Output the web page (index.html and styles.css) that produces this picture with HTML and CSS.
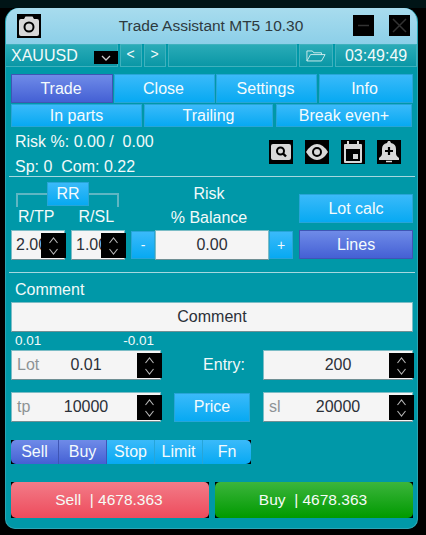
FILE: index.html
```html
<!DOCTYPE html>
<html lang="en">
<head>
<meta charset="utf-8">
<title>Trade Assistant MT5</title>
<link rel="stylesheet" href="styles.css">
</head>
<body>
<svg class="defs" width="0" height="0" aria-hidden="true">
  <symbol id="updown" viewBox="0 0 25 25"><path d="M8.500 10l4-5 4 5M8.500 16l4 5 4-5" fill="none" stroke="#b4b4b4" stroke-width="1.100"/></symbol>
</svg>
<main class="window">
  <header class="titlebar">
    <svg class="ico cam" viewBox="0 0 24 24"><rect width="24" height="24" fill="#000"/><path d="M2 7q0-2 2-2h3l1.500-2.500h7L17 5h3q2 0 2 2v13q0 2-2 2H4q-2 0-2-2z" fill="#d8d8d8"/><circle cx="12" cy="13" r="4.500" fill="none" stroke="#000" stroke-width="2"/></svg>
    <h1 class="title">Trade Assistant MT5 10.30</h1>
    <div class="winbtn min"><svg viewBox="0 0 21 21"><path d="M5 10.500h11" stroke="#333" stroke-width="1.500"/></svg></div>
    <div class="winbtn"><svg viewBox="0 0 21 21"><path d="M4 4l13 13M17 4L4 17" stroke="#333" stroke-width="1.500"/></svg></div>
  </header>
  <nav class="toolbar">
    <div class="tool sym"><span>XAUUSD</span><span class="dd"><svg viewBox="0 0 24 13"><path d="M8 5l4 4 4-4" fill="none" stroke="#ccc" stroke-width="1.300"/></svg></span></div>
    <div class="tool arrow">&lt;</div>
    <div class="tool arrow">&gt;</div>
    <div class="tool blank"></div>
    <div class="tool folder"><svg viewBox="0 0 22 14"><path d="M1 13V2h6l1.500 2H17v2M1 13L5 6h16l-4 7z" fill="none" stroke="#d8f0f0" stroke-width="1"/></svg></div>
    <div class="tool clock">03:49:49</div>
  </nav>
  <div class="content">
    <div class="tabs">
      <div class="btn active t1">Trade</div>
      <div class="btn t2">Close</div>
      <div class="btn t3">Settings</div>
      <div class="btn t4">Info</div>
    </div>
    <div class="subtabs">
      <div class="btn s1">In parts</div>
      <div class="btn s2">Trailing</div>
      <div class="btn s3">Break even+</div>
    </div>
    <section class="stats">
      <div class="statstext">
        <div class="stat">Risk %: 0.00 /&nbsp; 0.00</div>
        <div class="stat sp">Sp: 0&nbsp; Com: 0.22</div>
      </div>
      <div class="icons">
        <svg class="ico" viewBox="0 0 24 24"><rect width="24" height="24"/><rect x="2" y="4" width="20" height="16" rx="2" fill="#d8d8d8"/><circle cx="11.500" cy="11" r="3.500" fill="none" stroke="#000" stroke-width="2"/><path d="M14 13.500l3 3" stroke="#000" stroke-width="2.400"/></svg>
        <svg class="ico" viewBox="0 0 24 24"><rect width="24" height="24"/><path d="M1 12q5-8 11-8t11 8q-5 8-11 8T1 12z" fill="#d8d8d8"/><circle cx="12" cy="12" r="4" fill="none" stroke="#000" stroke-width="2"/></svg>
        <svg class="ico" viewBox="0 0 24 24"><rect width="24" height="24"/><path d="M3 5q0-1 1-1h16q1 0 1 1v17q0 1-1 1H4q-1 0-1-1z" fill="#d8d8d8"/><path d="M7 1v4M17 1v4" stroke="#d8d8d8" stroke-width="2"/><rect x="5" y="9" width="14" height="12" fill="#000"/><rect x="12" y="14" width="5" height="5" fill="#d8d8d8"/></svg>
        <svg class="ico" viewBox="0 0 24 24"><rect width="24" height="24"/><path d="M2 20v-2q3-2 3-4V9q0-5 5-6l1-2h2l1 2q5 1 5 6v5q0 2 3 4v2z" fill="#d8d8d8"/><path d="M9 21.500h6" stroke="#d8d8d8" stroke-width="1.500"/><path d="M12 7v8M8 11h8" stroke="#000" stroke-width="2.200"/></svg>
      </div>
    </section>
    <hr class="sep">
    <section class="risk">
      <div class="rr">
        <div class="rrhead"><div class="btn rrbtn">RR</div></div>
        <div class="rrlabels"><span>R/TP</span><span>R/SL</span></div>
        <div class="rrinputs">
          <div class="input small"><span>2.00</span><svg class="spin"><use href="#updown"/></svg></div>
          <div class="input small"><span>1.00</span><svg class="spin"><use href="#updown"/></svg></div>
        </div>
      </div>
      <div class="pct">
        <div class="pctlabel">Risk</div>
        <div class="pctlabel second">% Balance</div>
        <div class="stepper">
          <div class="btn step">-</div>
          <div class="input pctval">0.00</div>
          <div class="btn step">+</div>
        </div>
      </div>
      <div class="side">
        <div class="btn sidebtn">Lot calc</div>
        <div class="btn active sidebtn">Lines</div>
      </div>
    </section>
    <hr class="sep">
    <div class="stat comment">Comment</div>
    <div class="input commentbox">Comment</div>
    <div class="margins"><span>0.01</span><span>-0.01</span></div>
    <section class="order">
      <div class="input field"><span class="ph">Lot</span><span class="val">0.01</span><svg class="spin"><use href="#updown"/></svg></div>
      <div class="mid entry">Entry:</div>
      <div class="input field"><span class="val">200</span><svg class="spin"><use href="#updown"/></svg></div>
      <div class="input field"><span class="ph">tp</span><span class="val">10000</span><svg class="spin"><use href="#updown"/></svg></div>
      <div class="mid"><div class="btn price">Price</div></div>
      <div class="input field"><span class="ph">sl</span><span class="val">20000</span><svg class="spin"><use href="#updown"/></svg></div>
    </section>
    <div class="segwrap">
      <div class="btn active seg first">Sell</div>
      <div class="btn active seg">Buy</div>
      <div class="btn seg">Stop</div>
      <div class="btn seg">Limit</div>
      <div class="btn seg last">Fn</div>
    </div>
    <div class="trade">
      <div class="tradecell"><div class="tradebtn sell">Sell&nbsp; | 4678.363</div></div>
      <div class="tradecell"><div class="tradebtn buy">Buy&nbsp; | 4678.363</div></div>
    </div>
  </div>
</main>
</body>
</html>
```
FILE: styles.css
```css
* { box-sizing: border-box; }
html, body { margin: 0; height: 100%; }
body {
  background: linear-gradient(#001416 8px, #000 8px);
  padding: 8px 8px 6px 5px;
  font-family: "Liberation Sans", Arial, sans-serif;
  color: #f2fafa;
  overflow: hidden;
}
.defs { position: absolute; }
.window {
  width: 413px;
  height: 521px;
  background: #0098a8;
  border-radius: 14px 14px 10px 10px;
  border: 1px solid #2aa6b4;
  border-top: 0;
  overflow: hidden;
}
.titlebar {
  height: 36px;
  display: flex;
  align-items: center;
  padding: 0 7px 0 11px;
  background: linear-gradient(#a8dcee, #8ccfe8);
  position: relative;
}
.ico { width: 24px; height: 24px; display: block; flex: none; }
.title {
  flex: 1;
  margin: 0;
  font-size: 15.5px;
  font-weight: 400;
  color: #2e3a40;
  text-align: center;
  padding-left: 28px;
}
.winbtn { width: 21px; height: 21px; background: #000; margin-top: -1px; }
.winbtn.min { margin-right: 15px; }
.winbtn svg { display: block; width: 21px; height: 21px; }
.toolbar { height: 23px; display: flex; gap: 2px; }
.tool {
  background: linear-gradient(#2aabb7, #0a97a6);
  border: 1px solid #3fb1bd;
  height: 23px;
  display: flex;
  align-items: center;
  justify-content: center;
  font-size: 14px;
}
.sym { width: 113px; margin-left: -1px; justify-content: space-between; padding-left: 5px; font-size: 16px; }
.dd { width: 24px; height: 13px; background: #000; margin-top: 3px; margin-right: -1px; }
.dd svg { display: block; width: 24px; height: 13px; }
.arrow { width: 22px; padding-bottom: 3px; }
.blank { width: 130px; }
.folder { width: 34px; }
.folder svg { width: 20px; height: 13px; }
.clock { width: 82px; font-size: 16px; }
.content { padding: 7px 4px 0 5px; }
.btn {
  display: flex;
  align-items: center;
  justify-content: center;
  color: #f4fbfd;
  font-size: 16px;
  background: linear-gradient(#3abafa, #07a9f2);
  border: 1px solid #27a5d8;
}
.btn.active {
  background: linear-gradient(#6f8be8, #4460d4);
  border-color: #3f55b4;
}
.tabs { display: flex; gap: 1px; height: 29px; }
.tabs .btn { padding-right: 2px; }
.t1 { width: 102px; }
.t2 { width: 101px; }
.t3 { width: 101px; }
.t4 { width: 94px; margin-left: 1px; }
.t4.btn { padding-right: 3px; }
.subtabs { display: flex; gap: 2px; height: 23px; margin-top: 1px; }
.s1 { width: 131px; }
.s2 { width: 129px; }
.s3 { width: 136px; margin-left: 1px; }
.stats {
  height: 49px;
  display: flex;
  justify-content: space-between;
  padding: 5px 12px 0 4px;
}
.stat { font-size: 16px; line-height: 20px; }
.statstext .stat { height: 20px; }
.statstext .sp { margin-top: 5px; }
.icons { display: flex; gap: 12px; margin-top: 8px; }
.sep { height: 1px; border: 0; margin: 0 -2px; background: #a6d8df; }
.risk { height: 95px; display: flex; }
.rr { width: 120px; flex: none; }
.rrhead { height: 30px; padding: 5px 0 0 31px; margin: 0 12px 0 5px; position: relative; }
.rrhead::before {
  content: "";
  position: absolute;
  left: 0;
  right: 0;
  top: 16px;
  height: 12px;
  border: 2px solid #5fb6c3;
  border-bottom: 0;
}
.rrbtn { width: 42px; height: 24px; position: relative; }
.rrlabels { display: flex; height: 22px; align-items: center; font-size: 16px; padding-left: 7px; gap: 24px; margin-top: -1px; }
.input {
  background: #f5f5f5;
  color: #2b3038;
  border: 1px solid #7cbdc6;
  border-bottom-color: #6f8f94;
  position: relative;
  display: flex;
  align-items: center;
  justify-content: center;
  font-size: 16px;
}
.rrinputs { display: flex; gap: 6px; margin-top: 2px; }
.small { width: 54px; height: 30px; justify-content: flex-start; padding-left: 4px; }
.spin { position: absolute; width: 25px; height: 25px; right: -2px; top: 2px; background: #000; }
.pct { width: 168px; flex: none; text-align: center; padding-top: 7px; }
.pctlabel { font-size: 16px; line-height: 20px; padding-right: 12px; }
.second { margin-top: 4px; }
.stepper { display: flex; align-items: center; margin-top: 2px; height: 30px; width: 162px; }
.step { width: 24px; height: 28px; flex: none; font-size: 14px; }
.pctval { width: 114px; height: 30px; flex: none; }
.side { width: 114px; flex: none; padding-top: 17px; display: flex; flex-direction: column; gap: 7px; }
.sidebtn { height: 29px; }
.comment { padding-left: 4px; margin-top: 7px; }
.commentbox { width: 402px; height: 30px; margin-top: 2px; }
.margins {
  display: flex;
  justify-content: space-between;
  width: 143px;
  padding-left: 4px;
  font-size: 13.5px;
  line-height: 18px;
}
.order {
  display: grid;
  grid-template-columns: 150px 102px 150px;
  grid-auto-rows: 30px;
  row-gap: 12px;
}
.field { justify-content: flex-start; padding-left: 5px; }
.ph { color: #8d9396; }
.val { position: absolute; left: 0; right: 0; text-align: center; }
.mid { display: flex; align-items: center; justify-content: center; font-size: 16px; }
.entry { padding-left: 24px; }
.price { width: 76px; height: 29px; }
.segwrap {
  display: flex;
  width: 240px;
  height: 24px;
  margin-top: 18px;
  background: #000;
}
.seg { width: 48px; height: 24px; border-width: 0 1px 0 0; }
.seg.first { border-radius: 5px 0 0 5px; }
.seg.last { border-radius: 0 5px 5px 0; border: 0; }
.trade { display: flex; gap: 6px; margin-top: 18px; }
.tradecell { width: 198px; height: 36px; background: #000; }
.tradebtn {
  height: 36px;
  border-radius: 5px;
  display: flex;
  align-items: center;
  justify-content: center;
  font-size: 15.5px;
  color: #f6fbf6;
  padding-right: 2px;
}
.sell { background: linear-gradient(#f27c88, #ee4b5c); }
.buy { background: linear-gradient(#3cb53c, #009a00); }
```
